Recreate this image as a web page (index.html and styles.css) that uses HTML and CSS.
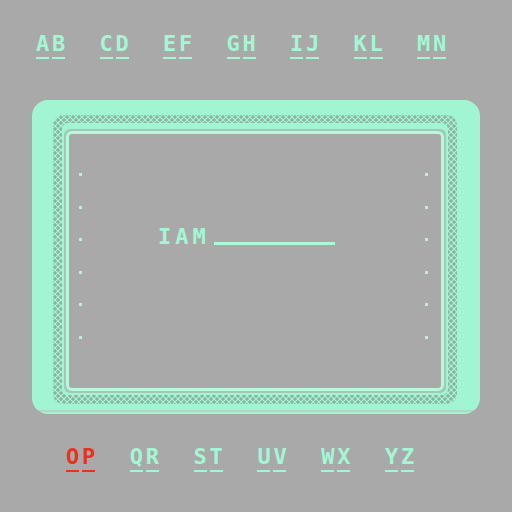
FILE: index.html
```html
<!DOCTYPE html>
<html>
<head>
<meta charset="utf-8">
<link rel="stylesheet" href="styles.css">
</head>
<body>
<nav class="menu top">
  <div class="item"><span class="ch">A</span><span class="ch">B</span></div>
  <div class="item"><span class="ch">C</span><span class="ch">D</span></div>
  <div class="item"><span class="ch">E</span><span class="ch">F</span></div>
  <div class="item"><span class="ch">G</span><span class="ch">H</span></div>
  <div class="item"><span class="ch">I</span><span class="ch">J</span></div>
  <div class="item"><span class="ch">K</span><span class="ch">L</span></div>
  <div class="item"><span class="ch">M</span><span class="ch">N</span></div>
</nav>
<div class="frame">
  <div class="dots">
    <div class="ring">
      <div class="gap">
        <div class="inner">
          <div class="col left">
            <i></i><i></i><i></i><i></i><i></i><i></i>
          </div>
          <div class="center">
            <div class="prompt"><span class="word">IAM</span><span class="blank"></span></div>
          </div>
          <div class="col right">
            <i></i><i></i><i></i><i></i><i></i><i></i>
          </div>
        </div>
      </div>
    </div>
  </div>
</div>
<nav class="menu bottom">
  <div class="item active"><span class="ch">O</span><span class="ch">P</span></div>
  <div class="item"><span class="ch">Q</span><span class="ch">R</span></div>
  <div class="item"><span class="ch">S</span><span class="ch">T</span></div>
  <div class="item"><span class="ch">U</span><span class="ch">V</span></div>
  <div class="item"><span class="ch">W</span><span class="ch">X</span></div>
  <div class="item"><span class="ch">Y</span><span class="ch">Z</span></div>
</nav>
</body>
</html>
```
FILE: styles.css
```css
html, body {
  margin: 0;
  padding: 0;
  background: #a9a9a9;
  width: 512px;
  height: 512px;
  overflow: hidden;
  font-family: "DejaVu Sans Mono", "Liberation Mono", monospace;
}

.menu {
  display: flex;
  color: #a4f6d4;
  font-weight: bold;
  font-size: 22px;
  line-height: 20px;
}

.menu.top {
  margin-top: 34px;
  padding-left: 36px;
}

.menu.bottom {
  margin-top: 33px;
  padding-left: 66px;
}

.item {
  flex: 0 0 63.5px;
  display: flex;
}

.menu.bottom .item {
  flex-basis: 63.8px;
}

.item.active {
  color: #e8321e;
}

.ch {
  display: inline-block;
  width: 13px;
  margin-right: 3px;
  padding-bottom: 3px;
  border-bottom: 2px solid currentColor;
  text-align: center;
}

.frame {
  margin: 41px 0 0 32px;
  width: 448px;
  height: 314px;
  box-sizing: border-box;
  padding: 15px 23px 10px 21px;
  border-radius: 16px;
  background:
    linear-gradient(to top, #a2f5d3 0 2px, #b0d6c4 2px 4px, transparent 4px),
    #a2f5d3;
}

.dots {
  height: 100%;
  box-sizing: border-box;
  padding: 8px 9px 9px 9px;
  border-radius: 10px;
  background:
    radial-gradient(circle at 2px 2px, #8cb3a1 1.4px, transparent 2px) 0 0 / 6px 6px,
    radial-gradient(circle at 2px 2px, #8cb3a1 1.4px, transparent 2px) 3px 3px / 6px 6px,
    #a2f5d3;
}

.ring {
  height: 100%;
  box-sizing: border-box;
  padding: 6px 2px 2px 2px;
  background: #a2f5d3;
  border-radius: 6px;
}

.gap {
  height: 100%;
  box-sizing: border-box;
  padding: 2px;
  background: #a4c7b6;
  border-radius: 6px;
}

.inner {
  height: 100%;
  box-sizing: border-box;
  border: 3px solid #b6f9dd;
  border-radius: 6px;
  background: #a9a9a9;
  display: flex;
}

.col {
  display: flex;
  flex-direction: column;
  gap: 29.5px;
  padding-top: 39px;
}

.col.left {
  padding-left: 10px;
}

.col.right {
  padding-right: 13px;
}

.col i {
  display: block;
  width: 3px;
  height: 3px;
  background: #b6f0d8;
}

.center {
  flex: 1;
  padding-top: 93px;
  padding-left: 76px;
}

.prompt {
  display: flex;
  align-items: flex-end;
  color: #a4f6d4;
  font-weight: bold;
  font-size: 22px;
  line-height: 20px;
}

.word {
  letter-spacing: 4px;
}

.blank {
  display: inline-block;
  width: 121px;
  height: 3px;
  margin-left: 4px;
  margin-bottom: 2px;
  background: #b0f8da;
}
```
